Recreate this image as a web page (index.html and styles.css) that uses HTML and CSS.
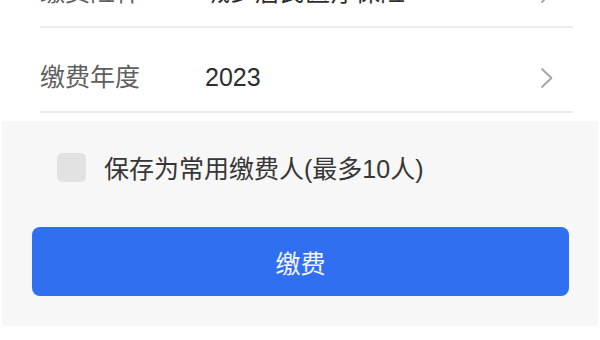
FILE: index.html
```html
<!DOCTYPE html>
<html lang="zh-CN">
<head>
<meta charset="utf-8">
<title>缴费</title>
<link rel="stylesheet" href="styles.css">
</head>
<body>
<div class="page">
  <section class="form">
    <div class="row">
      <span class="label">缴费险种</span>
      <span class="value">城乡居民医疗保险</span>
      <svg class="chev" viewBox="0 0 14 22" width="14" height="22"><path d="M2 2 L11.5 11 L2 20" fill="none" stroke="#a3a3a3" stroke-width="1.8" stroke-linecap="round" stroke-linejoin="round"/></svg>
    </div>
    <div class="row">
      <span class="label">缴费年度</span>
      <span class="value">2023</span>
      <svg class="chev" viewBox="0 0 14 22" width="14" height="22"><path d="M2 2 L11.5 11 L2 20" fill="none" stroke="#a3a3a3" stroke-width="1.8" stroke-linecap="round" stroke-linejoin="round"/></svg>
    </div>
  </section>
  <section class="panel">
    <label class="save">
      <span class="box"></span>
      <span class="save-text">保存为常用缴费人(最多10人)</span>
    </label>
    <button class="pay" type="button">缴费</button>
  </section>
</div>
</body>
</html>
```
FILE: styles.css
```css
html, body {
  margin: 0;
  padding: 0;
  background: #ffffff;
  overflow: hidden;
}
body {
  width: 600px;
  height: 340px;
  font-family: "Liberation Sans", "Noto Sans CJK SC", sans-serif;
}
.page {
  display: flex;
  flex-direction: column;
}
.form {
  margin-top: -57px;
  padding: 0 27px 0 40px;
}
.row {
  display: flex;
  align-items: center;
  height: 30px;
  padding: 34px 0 19px;
  border-bottom: 2px solid #ebebeb;
}
.label {
  width: 165px;
  font-size: 25px;
  line-height: 30px;
  color: #5f5f5f;
}
.value {
  flex: 1;
  font-size: 25px;
  line-height: 30px;
  color: #2e2e2e;
}
.chev {
  margin-right: 19px;
  margin-top: 2px;
}
.panel {
  margin: 8px 2px 0;
  background: #f7f7f7;
  padding: 32px 29px 30px 30px;
  display: flex;
  flex-direction: column;
}
.save {
  display: flex;
  align-items: center;
  gap: 18px;
  padding-left: 25px;
  height: 29px;
}
.box {
  width: 29px;
  height: 29px;
  border-radius: 5px;
  background: #e2e2e2;
  flex: none;
}
.save-text {
  font-size: 25px;
  line-height: 30px;
  color: #363636;
  margin-top: 2px;
}
.pay {
  margin-top: 45px;
  height: 69px;
  border: none;
  border-radius: 8px;
  background: #3070f0;
  color: #f4f7ff;
  font-family: "Liberation Sans", "Noto Sans CJK SC", sans-serif;
  font-size: 25px;
  padding: 0;
}
```
